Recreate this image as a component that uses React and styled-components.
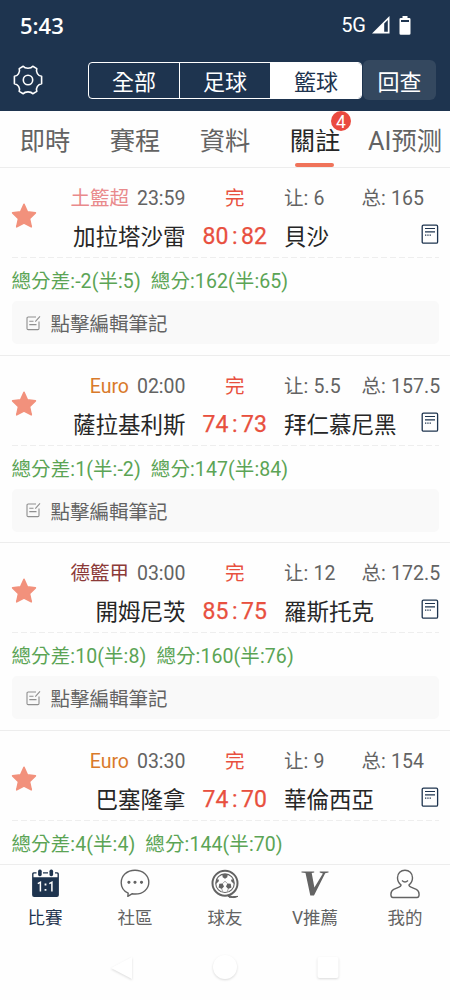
import React, {useState} from 'react';
import styled, {createGlobalStyle} from "styled-components";

const Colors = {
  navy: '#1e344f',
  navyLight: '#34485f',
  appRed: '#e8503f',
  coral: '#f0735a',
  star: '#f2917c',
  green: '#5ba455',
  text: '#262626',
  grey: '#636363',
  line: '#ededed',
};

const sports = ['全部', '足球', '籃球'];

const tabs = [
  {label: '即時'},
  {label: '賽程'},
  {label: '資料'},
  {label: '關註', badge: 4},
  {label: 'AI预测'},
];

const matches = [
  {league: '土籃超', color: '#e98a8c', time: '23:59', home: '加拉塔沙雷', away: '貝沙', score: [80, 82], spread: '6', total: '165', diff: '-2(半:5)', sum: '162(半:65)', note: '點擊編輯筆記'},
  {league: 'Euro', color: '#d97a2b', time: '02:00', home: '薩拉基利斯', away: '拜仁慕尼黑', score: [74, 73], spread: '5.5', total: '157.5', diff: '1(半:-2)', sum: '147(半:84)', note: '點擊編輯筆記'},
  {league: '德籃甲', color: '#8c3a38', time: '03:00', home: '開姆尼茨', away: '羅斯托克', score: [85, 75], spread: '12', total: '172.5', diff: '10(半:8)', sum: '160(半:76)', note: '點擊編輯筆記'},
  {league: 'Euro', color: '#d97a2b', time: '03:30', home: '巴塞隆拿', away: '華倫西亞', score: [74, 70], spread: '9', total: '154', diff: '4(半:4)', sum: '144(半:70)'},
];

const GearIcon = () => (
  <svg width="30" height="30" viewBox="0 0 30 30" fill="none" stroke="#fff" strokeWidth="1.6" strokeLinejoin="round">
    <path d="M10.2 1.3 C12 3.8 18 3.8 19.8 1.3 L23.8 3.6 C22.6 7 25 10.9 28.6 11.3 V18.7 C25 19.1 22.6 23 23.8 26.4 L19.8 28.7 C18 26.2 12 26.2 10.2 28.7 L6.2 26.4 C7.4 23 5 19.1 1.4 18.7 V11.3 C5 10.9 7.4 7 6.2 3.6 Z" />
    <circle cx="15" cy="15" r="4.7" />
  </svg>
);

const SignalIcon = () => (
  <svg width="18" height="18" viewBox="0 0 18 18">
    <path d="M0 17.5 L17.5 0 V17.5 Z M12.2 7.6 V15.8 H15.8 V4 Z" fill="#fff" fillRule="evenodd" />
  </svg>
);

const BatteryIcon = () => (
  <svg width="12" height="19" viewBox="0 0 12 19">
    <path d="M3.5 0 H8.5 V2 H10.2 Q11.5 2 11.5 3.3 V17.5 Q11.5 18.8 10.2 18.8 H1.8 Q.5 18.8 .5 17.5 V3.3 Q.5 2 1.8 2 H3.5 Z M2 4 V6 H10 V4 Z" fill="#fff" fillRule="evenodd" />
  </svg>
);

const StarIcon = () => (
  <svg width="26" height="26" viewBox="0 0 26 26">
    <path d="M13 1.3 L16.4 8.9 L24.4 9.9 L18.5 15.6 L20.3 23.8 L13 20.1 L5.7 23.8 L7.5 15.6 L1.6 9.9 L9.6 8.9 Z" fill={Colors.star} stroke={Colors.star} strokeWidth="1.6" strokeLinejoin="round" />
  </svg>
);

const DocIcon = () => (
  <svg width="18" height="21" viewBox="0 0 18 21" fill="none" stroke={Colors.navy}>
    <rect x="1.2" y="1.2" width="15.4" height="18" rx="1.3" strokeWidth="1.3" />
    <path d="M4 4.5 H14 M4 7.8 H14" strokeWidth="1.2" />
    <path d="M4 11.2 H10" strokeWidth="1.3" strokeDasharray="1.3 1" />
  </svg>
);

const EditIcon = () => (
  <svg width="15" height="16" viewBox="0 0 15 16" fill="none" stroke="#8f8f8f" strokeWidth="1.1">
    <path d="M10 2 H2.2 Q1 2 1 3.2 V13.4 Q1 14.6 2.2 14.6 H11.8 Q13 14.6 13 13.4 V6.5" />
    <path d="M3.3 6.2 H7.5 M3.3 9.6 H10.5 M9.3 6.6 L14 1.4" />
  </svg>
);

const CalendarIcon = () => (
  <svg width="28" height="29" viewBox="-.5 0 28 29">
    <path d="M.6 9.8 V4.8 Q.6 3.2 2.2 3.2 H5 V4.6 H2.6 Q2 4.6 2 5.2 V8.2 H26 V5.2 Q26 4.6 25.4 4.6 H23.5 V3.2 H25.8 Q27.4 3.2 27.4 4.8 V26 Q27.4 28 25.4 28 H2.6 Q.6 28 .6 26 Z M11.5 3.2 H16.5 V4.6 H11.5 Z" fill={Colors.navy} />
    <rect x="6.6" y=".6" width="3.6" height="6.6" rx="1.6" fill={Colors.navy} />
    <rect x="18" y=".6" width="3.6" height="6.6" rx="1.6" fill={Colors.navy} />
    <path d="M6.3 14.6 L8.9 13.2 V22.6 M17.8 14.6 L20.4 13.2 V22.6" fill="none" stroke="#fff" strokeWidth="1.5" />
    <path d="M13.1 14.6 H14.9 V16.4 H13.1 Z M13.1 19.9 H14.9 V21.7 H13.1 Z" fill="#fff" />
  </svg>
);

const ChatIcon = () => (
  <svg width="30" height="29" viewBox="0 0 30 29" fill="none" stroke={Colors.grey} strokeWidth="1.4">
    <path d="M8.2 24.2 C4 22.2 1.2 18.4 1.2 13.7 C1.2 6.6 7 1.3 15 1.3 C23 1.3 28.8 6.6 28.8 13.3 C28.8 20 23 25 15.2 25 C14 25 13 24.9 11.9 24.8 L7.8 27.3 Z" strokeLinejoin="round" />
    <path d="M8.9 11.7 a1.6 1.6 0 1 0 .01 0 Z M15 11.7 a1.6 1.6 0 1 0 .01 0 Z M21.5 11.7 a1.6 1.6 0 1 0 .01 0 Z" fill={Colors.grey} stroke="none" />
  </svg>
);

const BallIcon = () => (
  <svg width="29" height="30" viewBox="0 0 29 30" fill="none" stroke={Colors.grey}>
    <circle cx="14" cy="14.2" r="12.5" strokeWidth="2" />
    <circle cx="14" cy="14.2" r="9.3" strokeWidth="1.1" />
    <path d="M11.2 5.3 Q14 4.6 16.8 5.3 L16.3 8.2 L14 9.7 L11.7 8.2 Z" fill={Colors.grey} stroke="none" />
    <path d="M8.3 14.8 L11.6 14.6 L13 17.6 L10.8 20 L7.6 18.4 Z M19.7 14.8 L16.4 14.6 L15 17.6 L17.2 20 L20.4 18.4 Z" fill={Colors.grey} stroke="none" />
    <path d="M5.1 10.5 L7.4 10.2 L8 12 L5 15 Z M22.9 10.5 L20.6 10.2 L20 12 L23 15 Z" fill={Colors.grey} stroke="none" />
    <path d="M11.6 14.6 L14 12.2 L16.4 14.6 M10.8 20 L11.6 22.6 M17.2 20 L16.4 22.6" strokeWidth=".6" />
    <path d="M16.5 26 Q21 28.6 27 27.4 Q23.5 29.4 18 28.2 Z" fill={Colors.grey} strokeWidth="1" />
  </svg>
);

const VIcon = () => (
  <svg width="28" height="28" viewBox="0 0 28 28" fill={Colors.grey}>
    <path d="M.5 2.5 H13.2 V3.4 L10.7 3.9 L13.4 18.5 L21.9 4.5 L18.7 3.4 V2.5 H27.5 V3.4 L24.2 4.3 L13 26.5 H9.3 L4.5 4.1 L.5 3.4 Z" />
  </svg>
);

const UserIcon = () => (
  <svg width="30" height="30" viewBox="0 0 30 30" fill="none" stroke={Colors.grey} strokeWidth="1.4" strokeLinejoin="round">
    <path d="M11.1 16 C8.6 14 7.5 11.4 7.5 8.7 C7.5 4.3 10.8 1.2 15 1.2 C19.2 1.2 22.5 4.3 22.5 8.7 C22.5 11.4 21.4 14 18.9 16 Q19.2 17.5 21 18.2 L26.3 20.4 Q29.1 21.7 29.1 25.5 Q29.1 28.5 27 28.5 H3 Q.9 28.5 .9 25.5 Q.9 21.7 3.7 20.4 L9 18.2 Q10.8 17.5 11.1 16 Z" />
    <path d="M12 11.6 Q15 14.5 18 11.6" />
  </svg>
);

const navItems = [
  {label: '比賽', icon: <CalendarIcon />},
  {label: '社區', icon: <ChatIcon />},
  {label: '球友', icon: <BallIcon />},
  {label: 'V推薦', icon: <VIcon />},
  {label: '我的', icon: <UserIcon />},
];

const MatchCard = ({match}) => (
  <Card>
    <Summary>
      <StarIcon />
      <Home>
        <Meta>
          <League $color={match.color}>{match.league}</League>
          <span>{match.time}</span>
        </Meta>
        <Team>{match.home}</Team>
      </Home>
      <Result>
        <Status>完</Status>
        <Score>
          <span>{match.score[0]}</span>
          <span>:</span>
          <span>{match.score[1]}</span>
        </Score>
      </Result>
      <Away>
        <Odds>
          <Spread>让: {match.spread}</Spread>
          <span>总: {match.total}</span>
        </Odds>
        <AwayRow>
          <Team>{match.away}</Team>
          <DocIcon />
        </AwayRow>
      </Away>
    </Summary>
    <Dashes />
    <Totals>
      <span>總分差:{match.diff}</span>
      <span>總分:{match.sum}</span>
    </Totals>
    {match.note && (
      <Note>
        <EditIcon />
        <span>{match.note}</span>
      </Note>
    )}
  </Card>
);

const App = () => {
  const [sport, setSport] = useState('籃球');
  const [tab, setTab] = useState('關註');
  const [page, setPage] = useState('比賽');

  return (
    <Screen>
      <GlobalStyle />
      <Header>
        <StatusBar>
          <Clock>5:43</Clock>
          <Network>5G</Network>
          <SignalIcon />
          <BatteryIcon />
        </StatusBar>
        <Toolbar>
          <GearIcon />
          <Segments>
            {sports.map(name => (
              <Segment key={name} $active={name === sport} onClick={() => setSport(name)}>{name}</Segment>
            ))}
          </Segments>
          <Review>回查</Review>
        </Toolbar>
      </Header>
      <Tabs>
        {tabs.map(({label, badge}) => (
          <Tab key={label} $active={label === tab} onClick={() => setTab(label)}>
            {label}
            {badge && <Badge>{badge}</Badge>}
          </Tab>
        ))}
      </Tabs>
      <List>
        {matches.map(match => <MatchCard key={match.home} match={match} />)}
      </List>
      <BottomNav>
        {navItems.map(({label, icon}) => (
          <NavItem key={label} $active={label === page} onClick={() => setPage(label)}>
            <NavIcon>{icon}</NavIcon>
            {label}
          </NavItem>
        ))}
      </BottomNav>
      <SystemBar>
        <svg width="24" height="26" viewBox="0 0 24 26"><path d="M22 2 V24 L1 13 Z" /></svg>
        <svg width="28" height="28" viewBox="0 0 28 28"><circle cx="14" cy="13" r="12" /></svg>
        <svg width="24" height="26" viewBox="0 0 24 26"><rect x="1.5" y="2" width="21" height="21" rx="2" /></svg>
      </SystemBar>
    </Screen>
  );
}

const GlobalStyle = createGlobalStyle`
  * {
    box-sizing: border-box;
  }

  body {
    margin: 0;
    background: #fff;
    font-family: Roboto, "Noto Sans CJK TC", sans-serif;
    font-weight: 400;
  }

  svg {
    display: block;
    flex-shrink: 0;
  }
`;

const Screen = styled.div`
  display: flex;
  flex-direction: column;
  width: 450px;
  height: 1000px;
  overflow: hidden;
  background: #fefefe;
`;

const Header = styled.div`
  height: 111px;
  flex-shrink: 0;
  background: ${Colors.navy};
  color: #fff;
`;

const StatusBar = styled.div`
  display: flex;
  align-items: center;
  height: 50px;
  padding: 0 39px 0 20px;
`;

const Clock = styled.div`
  flex: 1;
  font-family: "Open Sans", Roboto, sans-serif;
  font-weight: 600;
  font-size: 22px;
`;

const Network = styled.div`
  margin-right: 6px;
  font-size: 20px;

  & + svg {
    margin-right: 9px;
  }
`;

const Toolbar = styled.div`
  display: flex;
  align-items: center;
  height: 60px;
  padding-left: 13px;
`;

const Segments = styled.div`
  display: flex;
  width: 274px;
  height: 37px;
  margin-left: 45px;
  border: 1px solid #fff;
  border-radius: 4px;
  overflow: hidden;
`;

const Segment = styled.button`
  flex: 1;
  padding: 0;
  border: 0;
  background: ${props => props.$active ? '#fff' : 'transparent'};
  color: ${props => props.$active ? Colors.navy : '#fff'};
  font: inherit;
  font-size: 22px;
  cursor: pointer;

  & + & {
    border-left: 1px solid #fff;
  }
`;

const Review = styled.button`
  width: 73px;
  height: 40px;
  margin-left: 1px;
  padding: 0;
  border: 0;
  border-radius: 6px;
  background: ${Colors.navyLight};
  color: #fff;
  font: inherit;
  font-size: 22px;
`;

const Tabs = styled.div`
  display: flex;
  height: 57px;
  flex-shrink: 0;
  border-bottom: 1px solid ${Colors.line};
`;

const Tab = styled.div`
  position: relative;
  display: flex;
  align-items: center;
  justify-content: center;
  width: 90px;
  padding-top: 6px;
  font-size: 25.3px;
  line-height: 28px;
  white-space: nowrap;
  cursor: pointer;
  color: ${props => props.$active ? Colors.text : Colors.grey};

  &::after {
    content: "";
    display: ${props => props.$active ? 'block' : 'none'};
    position: absolute;
    left: 25px;
    bottom: 0;
    width: 39px;
    height: 4px;
    border-radius: 2px;
    background: ${Colors.coral};
  }
`;

const Badge = styled.div`
  position: absolute;
  top: 0;
  left: 61px;
  width: 20px;
  height: 20px;
  border-radius: 50%;
  background: #ea4a3f;
  color: #fff;
  font-size: 17.5px;
  line-height: 22px;
  text-align: center;
`;

const List = styled.div`
  flex: 1;
  min-height: 0;
  overflow: hidden;
`;

const Card = styled.div`
  height: 187.5px;
  padding: 0 11.5px;
  border-bottom: 1px solid ${Colors.line};
`;

const Summary = styled.div`
  display: flex;
  height: 89px;
  padding-top: 16px;

  & > svg {
    margin-top: 19px;
    margin-left: -1px;
  }
`;

const Home = styled.div`
  display: flex;
  flex-direction: column;
  align-items: flex-end;
  width: 149px;
  flex-shrink: 0;
`;

const Meta = styled.div`
  display: flex;
  gap: 8px;
  height: 30px;
  font-size: 19.5px;
  line-height: 30px;
  color: ${Colors.grey};
`;

const League = styled.span`
  color: ${props => props.$color};
`;

const Team = styled.div`
  height: 44px;
  font-size: 22.5px;
  line-height: 46px;
  color: ${Colors.text};
  white-space: nowrap;
`;

const Result = styled.div`
  width: 98.5px;
  flex-shrink: 0;
  text-align: center;
  color: ${Colors.appRed};
`;

const Status = styled.div`
  height: 30px;
  font-size: 19.5px;
  line-height: 30px;
`;

const Score = styled.div`
  display: flex;
  justify-content: center;
  gap: 3.5px;
  font-size: 23px;
  line-height: 45px;
  -webkit-text-stroke: 0.25px ${Colors.appRed};
`;

const Away = styled.div`
  flex: 1;
  min-width: 0;
`;

const Odds = styled.div`
  display: flex;
  height: 30px;
  font-size: 19.5px;
  letter-spacing: 0.1px;
  line-height: 30px;
  color: ${Colors.grey};
  white-space: nowrap;
`;

const Spread = styled.div`
  width: 77.5px;
  flex-shrink: 0;
`;

const AwayRow = styled.div`
  display: flex;
  align-items: center;
  justify-content: space-between;

  svg {
    margin-bottom: 3px;
  }
`;

const Dashes = styled.div`
  height: 1px;
  background: repeating-linear-gradient(90deg, #eeeeee 0 6px, transparent 6px 9px);
`;

const Totals = styled.div`
  display: flex;
  gap: 10px;
  height: 43px;
  font-size: 19.5px;
  letter-spacing: 0.1px;
  line-height: 48px;
  color: ${Colors.green};
`;

const Note = styled.div`
  display: flex;
  align-items: center;
  gap: 10px;
  height: 43px;
  padding-left: 14px;
  border-radius: 5px;
  background: #f9f9f9;
  color: ${Colors.grey};
  font-size: 19.5px;
`;

const BottomNav = styled.div`
  display: flex;
  height: 76px;
  flex-shrink: 0;
  border-top: 1px solid ${Colors.line};
`;

const NavItem = styled.div`
  display: flex;
  flex-direction: column;
  align-items: center;
  width: 90px;
  padding-top: 4px;
  font-size: 17.5px;
  line-height: 28px;
  cursor: pointer;
  color: ${props => props.$active ? Colors.navy : Colors.grey};
`;

const NavIcon = styled.div`
  height: 35px;
`;

const SystemBar = styled.div`
  display: flex;
  justify-content: center;
  align-items: center;
  gap: 77px;
  height: 60px;
  flex-shrink: 0;
  padding-bottom: 4px;

  svg {
    fill: #fff;
    filter: drop-shadow(0 1px 1px rgba(0, 0, 0, 0.14));
  }
`;

export default App;
